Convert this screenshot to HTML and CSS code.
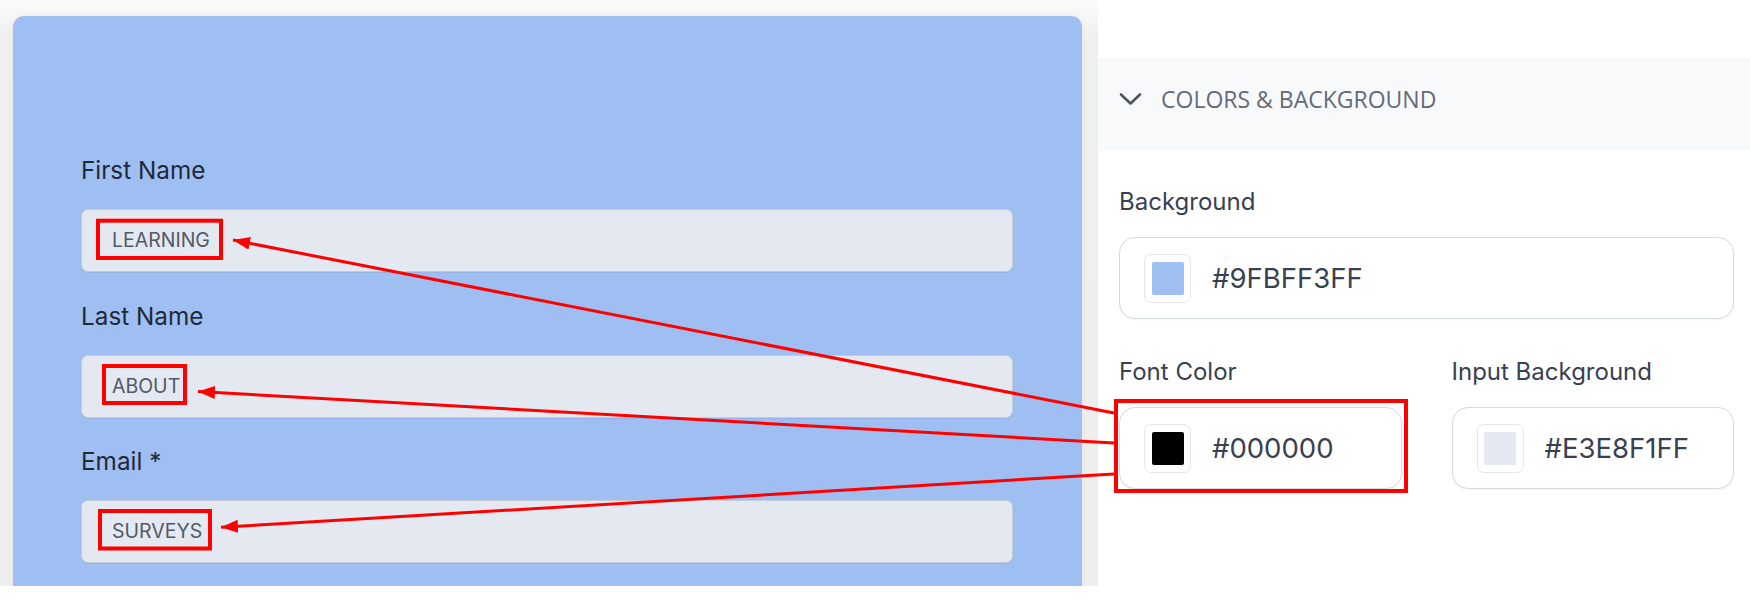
FILE: index.html
```html
<!DOCTYPE html>
<html lang="en">
<head>
<meta charset="utf-8">
<title>Form style editor</title>
<link rel="stylesheet" href="styles.css">
</head>
<body>
<div class="app">
  <section class="preview">
    <div class="card">
      <div class="field">
        <div class="label">First Name</div>
        <div class="input">LEARNING</div>
      </div>
      <div class="field">
        <div class="label">Last Name</div>
        <div class="input">ABOUT</div>
      </div>
      <div class="field">
        <div class="label">Email *</div>
        <div class="input">SURVEYS</div>
      </div>
    </div>
  </section>
  <aside class="panel">
    <div class="section-head">
      <svg class="chevron" width="23" height="14" viewBox="0 0 23 14"><polyline points="2,2.5 11.5,11.5 21,2.5" fill="none" stroke="#4b5563" stroke-width="2.6" stroke-linecap="round" stroke-linejoin="round"/></svg>
      <span class="section-title">COLORS &amp; BACKGROUND</span>
    </div>
    <div class="section-body">
      <div class="group">
        <div class="plabel">Background</div>
        <div class="color-input">
          <span class="swatch"><span class="chip" style="background:#9FBFF3"></span></span>
          <span class="hex">#9FBFF3FF</span>
        </div>
      </div>
      <div class="row">
        <div class="group">
          <div class="plabel">Font Color</div>
          <div class="color-input">
            <span class="swatch"><span class="chip" style="background:#000000"></span></span>
            <span class="hex">#000000</span>
          </div>
        </div>
        <div class="group">
          <div class="plabel">Input Background</div>
          <div class="color-input">
            <span class="swatch"><span class="chip" style="background:#E3E8F1"></span></span>
            <span class="hex">#E3E8F1FF</span>
          </div>
        </div>
      </div>
    </div>
  </aside>
  <svg class="annotations" width="1750" height="603" viewBox="0 0 1750 603">
    <defs>
      <marker id="head" markerUnits="userSpaceOnUse" markerWidth="18" markerHeight="13" refX="17" refY="6.5" orient="auto">
        <path d="M0,0 L17,6.5 L0,13 Z" fill="#ff0000"/>
      </marker>
    </defs>
    <g fill="none" stroke="#ff0000" stroke-width="4">
      <rect x="98" y="220.7" width="123" height="37.3"/>
      <rect x="104" y="366" width="81" height="37"/>
      <rect x="100" y="511" width="110" height="37.5"/>
      <rect x="1116" y="401" width="290" height="90"/>
    </g>
    <g stroke="#ff0000" stroke-width="3">
      <line x1="1114" y1="413" x2="233" y2="240" marker-end="url(#head)"/>
      <line x1="1114" y1="443" x2="198" y2="391.5" marker-end="url(#head)"/>
      <line x1="1114" y1="474" x2="221" y2="527.3" marker-end="url(#head)"/>
    </g>
  </svg>
</div>
</body>
</html>
```
FILE: styles.css
```css
* { box-sizing: border-box; }
html, body { margin: 0; padding: 0; background: #ffffff; }
body { font-family: Inter, "Noto Sans", sans-serif; }

.app {
  position: relative;
  display: flex;
  width: 1750px;
  height: 586px;
}

.preview {
  width: 1098px;
  flex: none;
  background: linear-gradient(to bottom, #fbfbfb 0, #efefef 40px, #eeeeee 100%);
  padding: 16px 16px 0 13px;
}

.card {
  height: 100%;
  background: #9fbff3;
  border-radius: 11px 11px 0 0;
  padding: 139px 69px 0 68px;
  box-shadow: 0 0 6px rgba(0, 0, 0, 0.05);
}

.field { margin-bottom: 28.5px; }

.label {
  font-size: 24.3px;
  line-height: 30px;
  color: #1f2937;
  margin-bottom: 24px;
}

.input {
  height: 63px;
  background: #e3e8f1;
  border: 1px solid #c6ccd6;
  border-radius: 7px;
  box-shadow: 0 1px 1px rgba(0, 0, 0, 0.06);
  display: flex;
  align-items: center;
  padding-left: 30px;
  font-size: 19.5px;
  color: #525a66;
  padding-bottom: 1px;
}

.panel {
  flex: 1;
  background: #ffffff;
  padding-top: 58px;
}

.section-head {
  height: 93px;
  background: #f8f9fb;
  display: flex;
  align-items: center;
  padding: 0 0 12px 21px;
}

.chevron { flex: none; margin-right: 19px; }

.section-title {
  font-family: "Open Sans", "Noto Sans", sans-serif;
  font-size: 23px;
  font-weight: 500;
  color: #636b78;
}

.section-body { padding: 36px 16px 0 21px; }

.row {
  display: grid;
  grid-template-columns: 1fr 1fr;
  column-gap: 50px;
  margin-top: 38px;
}

.plabel {
  font-size: 24px;
  line-height: 30px;
  color: #374151;
  margin-bottom: 20px;
}

.color-input {
  height: 82px;
  border: 1.5px solid #d6dae1;
  border-radius: 16px;
  background: #ffffff;
  box-shadow: 0 1px 2px rgba(0, 0, 0, 0.05);
  display: flex;
  align-items: center;
  padding-left: 24px;
}

.swatch {
  width: 47px;
  height: 49px;
  border: 1.5px solid #e5e7eb;
  border-radius: 7px;
  background: #ffffff;
  display: flex;
  align-items: center;
  justify-content: center;
  flex: none;
  margin-right: 21px;
}

.chip {
  width: 32px;
  height: 33px;
  border-radius: 2px;
  display: block;
}

.hex {
  font-size: 27.5px;
  color: #374151;
}

.annotations {
  position: absolute;
  left: 0;
  top: 0;
  pointer-events: none;
}
```
